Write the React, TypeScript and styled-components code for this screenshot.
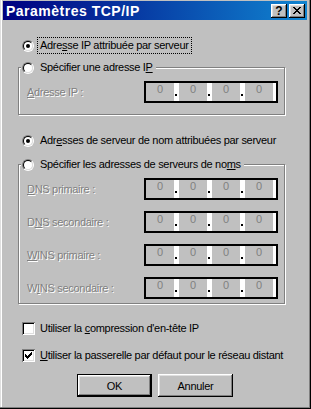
import React from "react";
import styled, { createGlobalStyle } from "styled-components";

const GlobalStyle = createGlobalStyle`
  html, body { margin: 0; padding: 0; background: #c0c0c0; }
  body { font-family: "Liberation Sans", Arial, sans-serif; font-size: 11px; color: #000; }
  * { box-sizing: border-box; }
`;

const Window = styled.div`
  width: 311px;
  height: 409px;
  background: #c0c0c0;
  padding: 1px 4px 4px 3px;
  display: flex;
  flex-direction: column;
  box-shadow: inset -1px -1px 0 #000, inset -2px -2px 0 #808080,
    inset 1px 0 0 #dfdfdf, inset 2px 0 0 #fff;
`;

const TitleBar = styled.div`
  height: 19px;
  flex: none;
  display: flex;
  align-items: center;
  padding: 0 2px 0 3px;
  background: linear-gradient(to right, #000080, #1084d0);
`;

const TitleText = styled.span`
  flex: 1;
  color: #fff;
  font-weight: bold;
  font-size: 14px;
  letter-spacing: 0.5px;
  line-height: 16px;
  white-space: nowrap;
`;

const CaptionButton = styled.div<{ $gap?: number }>`
  width: 16px;
  height: 14px;
  margin-left: ${(p) => p.$gap ?? 0}px;
  background: #c0c0c0;
  box-shadow: inset -1px -1px 0 #000, inset 1px 1px 0 #fff,
    inset -2px -2px 0 #808080, inset 2px 2px 0 #dfdfdf;
  display: flex;
  align-items: center;
  justify-content: center;
  font-weight: bold;
  font-size: 12px;
  line-height: 12px;
  color: #000;
`;

const Body = styled.div`
  display: flex;
  flex-direction: column;
  align-items: flex-start;
  padding-left: 15px;
  letter-spacing: -0.3px;
`;

const OptionRow = styled.div<{ $mt: number }>`
  display: flex;
  align-items: center;
  height: 13px;
  margin-top: ${(p) => p.$mt}px;
  margin-left: 4px;
`;

const RadioOuter = styled.span`
  width: 12px;
  height: 12px;
  flex: none;
  border-radius: 50%;
  border: 1px solid;
  border-color: #808080 #fff #fff #808080;
  display: flex;
`;

const RadioInner = styled.span`
  flex: 1;
  border-radius: 50%;
  border: 1px solid;
  border-color: #000 #dfdfdf #dfdfdf #000;
  background: #fff;
  display: flex;
  align-items: center;
  justify-content: center;
`;

const RadioDot = styled.span`
  width: 4px;
  height: 4px;
  border-radius: 50%;
  background: #000;
`;

const OptionLabel = styled.span<{ $focused?: boolean; $gap?: number }>`
  margin-left: ${(p) => p.$gap ?? 5}px;
  padding: 0 1px;
  line-height: 13px;
  white-space: nowrap;
  outline: ${(p) => (p.$focused ? "1px dotted #000" : "none")};
  outline-offset: 1px;
`;

const GroupBox = styled.div<{ $mt: number; $pb: number }>`
  width: 267px;
  margin-top: ${(p) => p.$mt}px;
  padding-bottom: ${(p) => p.$pb}px;
  border: 1px solid #808080;
  box-shadow: 1px 1px 0 #fff, inset 1px 1px 0 #fff;
  display: flex;
  flex-direction: column;
  align-items: flex-start;
`;

const Legend = styled.div`
  display: flex;
  align-items: center;
  height: 13px;
  margin: -7px 0 0 2px;
  padding: 0 2px 0 1px;
  background: #c0c0c0;
`;

const FieldRow = styled.div<{ $mt: number }>`
  display: flex;
  align-items: center;
  margin-top: ${(p) => p.$mt}px;
  padding-left: 8px;
`;

const FieldLabel = styled.span`
  width: 117px;
  color: #808080;
  text-shadow: 1px 1px 0 #fff;
  line-height: 13px;
  white-space: nowrap;
`;

const IpField = styled.div`
  width: 134px;
  height: 22px;
  border: 2px solid #000;
  background: #fff;
  display: flex;
`;

const IpSegment = styled.span`
  width: 28px;
  background: #c0c0c0;
  color: #808080;
  text-align: center;
  line-height: 13px;
`;

const IpSep = styled.span`
  width: 5px;
  display: flex;
  align-items: flex-end;
  padding: 0 0 5px 1px;
`;

const IpDot = styled.span`
  width: 2px;
  height: 2px;
  background: #000;
`;

const CheckBox = styled.span`
  width: 13px;
  height: 13px;
  flex: none;
  background: #fff;
  box-shadow: inset 1px 1px 0 #808080, inset -1px -1px 0 #fff,
    inset 2px 2px 0 #000, inset -2px -2px 0 #dfdfdf;
  display: flex;
  align-items: center;
  justify-content: center;
`;

const ButtonRow = styled.div`
  display: flex;
  gap: 6px;
  margin-top: 12px;
  padding-left: 59px;
`;

const PushButton = styled.button<{ $default?: boolean }>`
  width: 75px;
  height: 23px;
  padding: 0;
  border: none;
  background: #c0c0c0;
  color: #000;
  font-family: "Liberation Sans", Arial, sans-serif;
  font-size: 11px;
  letter-spacing: -0.3px;
  box-shadow: ${(p) =>
    p.$default
      ? "inset 0 0 0 1px #000, inset -2px -2px 0 #000, inset 2px 2px 0 #fff, inset -3px -3px 0 #808080, inset 3px 3px 0 #dfdfdf"
      : "inset -1px -1px 0 #000, inset 1px 1px 0 #fff, inset -2px -2px 0 #808080, inset 2px 2px 0 #dfdfdf"};
`;

const pixels = (rows: string[]) =>
  rows.flatMap((r, y) =>
    r.split("").map((c, x) =>
      c === "X" ? <rect key={`${x}-${y}`} x={x} y={y} width={1} height={1} /> : null
    )
  );

const CloseGlyph = () => (
  <svg width="8" height="7" viewBox="0 0 8 7" shapeRendering="crispEdges" fill="#000">
    {pixels(["XX....XX", ".XX..XX.", "..XXXX..", "...XX...", "..XXXX..", ".XX..XX.", "XX....XX"])}
  </svg>
);

const CheckGlyph = () => (
  <svg width="7" height="7" viewBox="0 0 7 7" shapeRendering="crispEdges" fill="#000">
    {pixels(["......X", ".....XX", "X...XXX", "XX.XXX.", "XXXXX..", ".XXX...", "..X...."])}
  </svg>
);

const Radio = ({ checked }: { checked?: boolean }) => (
  <RadioOuter>
    <RadioInner>{checked && <RadioDot />}</RadioInner>
  </RadioOuter>
);

const IpAddress = () => (
  <IpField>
    <IpSegment>0</IpSegment>
    <IpSep><IpDot /></IpSep>
    <IpSegment>0</IpSegment>
    <IpSep><IpDot /></IpSep>
    <IpSegment>0</IpSegment>
    <IpSep><IpDot /></IpSep>
    <IpSegment>0</IpSegment>
  </IpField>
);

export default function App() {
  return (
    <>
      <GlobalStyle />
      <Window>
        <TitleBar>
          <TitleText>Paramètres TCP/IP</TitleText>
          <CaptionButton>?</CaptionButton>
          <CaptionButton $gap={2}><CloseGlyph /></CaptionButton>
        </TitleBar>
        <Body>
          <OptionRow $mt={19}>
            <Radio checked />
            <OptionLabel $focused>Adre<u>s</u>se IP attribuée par serveur</OptionLabel>
          </OptionRow>

          <GroupBox $mt={15} $pb={11}>
            <Legend>
              <Radio />
              <OptionLabel>Spécifier une adresse I<u>P</u></OptionLabel>
            </Legend>
            <FieldRow $mt={7}>
              <FieldLabel><u>A</u>dresse IP :</FieldLabel>
              <IpAddress />
            </FieldRow>
          </GroupBox>

          <OptionRow $mt={19}>
            <Radio checked />
            <OptionLabel>Adr<u>e</u>sses de serveur de nom attribuées par serveur</OptionLabel>
          </OptionRow>

          <GroupBox $mt={17} $pb={4}>
            <Legend>
              <Radio />
              <OptionLabel>Spécifier les adresses de serveurs de no<u>m</u>s</OptionLabel>
            </Legend>
            <FieldRow $mt={7}>
              <FieldLabel><u>D</u>NS primaire :</FieldLabel>
              <IpAddress />
            </FieldRow>
            <FieldRow $mt={11}>
              <FieldLabel>D<u>N</u>S secondaire :</FieldLabel>
              <IpAddress />
            </FieldRow>
            <FieldRow $mt={11}>
              <FieldLabel><u>W</u>INS primaire :</FieldLabel>
              <IpAddress />
            </FieldRow>
            <FieldRow $mt={11}>
              <FieldLabel>W<u>I</u>NS secondaire :</FieldLabel>
              <IpAddress />
            </FieldRow>
          </GroupBox>

          <OptionRow $mt={18}>
            <CheckBox />
            <OptionLabel $gap={4}>Utiliser la <u>c</u>ompression d'en-tête IP</OptionLabel>
          </OptionRow>
          <OptionRow $mt={14}>
            <CheckBox><CheckGlyph /></CheckBox>
            <OptionLabel $gap={4}><u>U</u>tiliser la passerelle par défaut pour le réseau distant</OptionLabel>
          </OptionRow>

          <ButtonRow>
            <PushButton $default>OK</PushButton>
            <PushButton>Annuler</PushButton>
          </ButtonRow>
        </Body>
      </Window>
    </>
  );
}
